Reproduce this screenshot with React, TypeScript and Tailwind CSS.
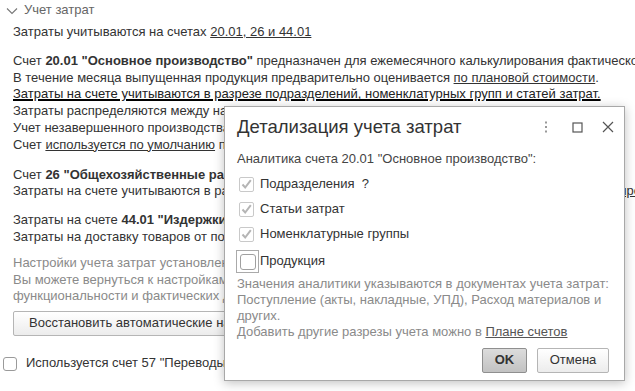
import React from "react";

function CheckedBox() {
  return (
    <span className="inline-flex w-[15px] h-[15px] border border-[#c9c9c9] rounded-[2px] bg-white items-center justify-center shrink-0">
      <svg width="13" height="13" viewBox="0 0 13 13">
        <path d="M2.5 6.5 L5.2 9.5 L10.8 2.2" fill="none" stroke="#b5b5b5" strokeWidth="2" />
      </svg>
    </span>
  );
}

export default function App() {
  return (
    <div
      className="relative w-[635px] h-[391px] overflow-hidden bg-white text-[#333] text-[13px] leading-[16.8px]"
      style={{ fontFamily: '"Liberation Sans", Arial, sans-serif' }}
    >
      {/* Header */}
      <div className="flex items-center h-[20px] pl-[6px] pt-[1px] text-[#666]">
        <svg width="12" height="8" viewBox="0 0 12 8" className="mr-[6px]">
          <path d="M1 1.5 L6 6.5 L11 1.5" fill="none" stroke="#777" strokeWidth="1.1" />
        </svg>
        <span>Учет затрат</span>
      </div>

      <div className="pl-[13px] whitespace-nowrap">
        <p className="mt-[4px]">
          Затраты учитываются на счетах <span className="underline">20.01, 26 и 44.01</span>
        </p>

        <div className="mt-[12px]">
          <p>
            Счет <b>20.01 "Основное производство"</b> предназначен для ежемесячного калькулирования фактической себестоимости продукции
          </p>
          <p>
            В течение месяца выпущенная продукция предварительно оценивается{" "}
            <span className="underline">по плановой стоимости</span>.
          </p>
          <p>
            <span className="underline decoration-2 decoration-black text-[#222]">
              Затраты на счете учитываются в разрезе подразделений, номенклатурных групп и статей затрат.
            </span>
          </p>
          <p>Затраты распределяются между на выпущенную продукцию и оказанные услуги</p>
          <p>Учет незавершенного производства ведется по остаткам</p>
          <p>
            Счет <span className="underline">используется по умолчанию</span> при отражении затрат
          </p>
        </div>

        <div className="mt-[13px]">
          <p>
            Счет <b>26 "Общехозяйственные расходы"</b> предназначен для учета управленческих расходов и
          </p>
          <p>Затраты на счете учитываются в разрезе подразделений и статей затрат. Распределяются на счета <span className="underline">производства</span></p>
        </div>

        <div className="mt-[12px]">
          <p>
            Затраты на счете <b>44.01 "Издержки обращения"</b> учитываются в разрезе статей затрат и
          </p>
          <p>Затраты на доставку товаров от поставщиков <span className="underline">включаются в себестоимость</span></p>
        </div>

        <div className="mt-[9px] text-[#8a8a8a]">
          <p>Настройки учета затрат установлены автоматически на основе данных</p>
          <p>Вы можете вернуться к настройкам по умолчанию, они будут подобраны с учетом</p>
          <p>функциональности и фактических данных</p>
        </div>

        <button className="mt-[6px] h-[25px] px-[15px] border border-[#b5b5b5] rounded-[2px] bg-gradient-to-b from-white to-[#ececec] text-[#333] text-[13px]">
          Восстановить автоматические настройки
        </button>
      </div>

      <div className="flex items-center mt-[19px] pl-[3px] whitespace-nowrap">
        <span className="w-[14px] h-[14px] border border-[#9a9a9a] rounded-[3px] bg-white mr-[9px] shrink-0" />
        <span>Используется счет 57 "Переводы в пути"</span>
      </div>

      {/* Dialog */}
      <div className="absolute left-[224px] top-[106px] w-[401px] h-[275px] bg-white border border-[#a8a8a8] shadow-[0_2px_10px_rgba(0,0,0,0.25)] flex flex-col">
        <div className="flex items-center h-[40px] pl-[12px] pr-[10px]">
          <span className="text-[18.5px] leading-[24px] text-[#333] flex-1">Детализация учета затрат</span>
          <svg width="4" height="12" viewBox="0 0 4 12" className="mr-[24px]">
            <rect x="1" y="0.5" width="2" height="2" fill="#999" />
            <rect x="1" y="5" width="2" height="2" fill="#999" />
            <rect x="1" y="9.5" width="2" height="2" fill="#999" />
          </svg>
          <svg width="11" height="11" viewBox="0 0 11 11" className="mr-[19px]">
            <rect x="1" y="1" width="9" height="9" fill="none" stroke="#555" strokeWidth="1.2" />
          </svg>
          <svg width="12" height="12" viewBox="0 0 12 12">
            <path d="M1 1 L11 11 M11 1 L1 11" stroke="#555" strokeWidth="1.2" />
          </svg>
        </div>

        <div className="pl-[12px] pr-[12px]">
          <p className="mt-[4px] text-[#444]">Аналитика счета 20.01 "Основное производство":</p>

          <div className="flex items-center mt-[9px] h-[16px]">
            <span className="ml-[2px] mr-[6px] flex"><CheckedBox /></span>
            <span>Подразделения&nbsp; ?</span>
          </div>
          <div className="flex items-center mt-[9px] h-[16px]">
            <span className="ml-[2px] mr-[6px] flex"><CheckedBox /></span>
            <span>Статьи затрат</span>
          </div>
          <div className="flex items-center mt-[9px] h-[16px]">
            <span className="ml-[2px] mr-[6px] flex"><CheckedBox /></span>
            <span>Номенклатурные группы</span>
          </div>
          <div className="flex items-center mt-[7px] h-[24px]">
            <span className="w-[23px] h-[23px] border border-[#aaa] flex items-center justify-center mr-[1px] -ml-[1px]">
              <span className="w-[16px] h-[16px] border border-[#a0a0a0] rounded-[3px] bg-white" />
            </span>
            <span>Продукция</span>
          </div>

          <div className="mt-[2px] text-[#8a8a8a] leading-[16px]">
            <p>Значения аналитики указываются в документах учета затрат:</p>
            <p>Поступление (акты, накладные, УПД), Расход материалов и</p>
            <p>других.</p>
            <p>
              Добавить другие разрезы учета можно в{" "}
              <span className="underline text-[#555]">Плане счетов</span>
            </p>
          </div>

          <div className="flex justify-end mt-[8px] pr-[3px] gap-[10px]">
            <button className="h-[25px] w-[45px] border border-[#8f8f8f] rounded-[2px] bg-gradient-to-b from-[#dcdcdc] to-[#c2c2c2] font-bold text-[#333] text-[13px]">
              OK
            </button>
            <button className="h-[25px] w-[72px] border border-[#b5b5b5] rounded-[2px] bg-gradient-to-b from-white to-[#ececec] text-[#333] text-[13px]">
              Отмена
            </button>
          </div>
        </div>
      </div>
    </div>
  );
}
